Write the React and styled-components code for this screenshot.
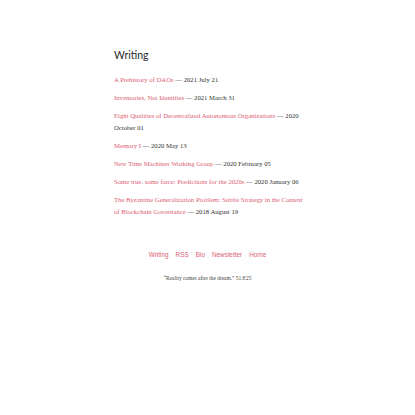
import React from 'react'
import styled, { createGlobalStyle } from 'styled-components'

const Global = createGlobalStyle`
  body { margin: 0; background: #fff; }
`

const posts = [
  { title: 'A Prehistory of DAOs', date: '2021 July 21' },
  { title: 'Inventories, Not Identities', date: '2021 March 31' },
  { title: 'Eight Qualities of Decentralized Autonomous Organizations', date: '2020 October 01' },
  { title: 'Memory I', date: '2020 May 13' },
  { title: 'New Time Machines Working Group', date: '2020 February 05' },
  { title: 'Some true, some farce: Predictions for the 2020s', date: '2020 January 06' },
  { title: 'The Byzantine Generalization Problem: Subtle Strategy in the Context of Blockchain Governance', date: '2018 August 19' },
]

const Page = styled.div`
  width: 415px;
  height: 415px;
  padding-top: 48px;
  box-sizing: border-box;
`

const Main = styled.main`
  width: 190px;
  margin-left: 114px;
`

const Title = styled.h1`
  font-family: Lato, 'Liberation Sans', sans-serif;
  font-weight: 400;
  font-size: 10.5px;
  line-height: 14px;
  color: #2a2a2a;
  margin: 0 0 12px;
`

const List = styled.ul`
  list-style: none;
  margin: 0;
  padding: 0;
`

const Item = styled.li`
  font-family: 'Liberation Serif', 'Times New Roman', serif;
  font-size: 6.7px;
  line-height: 12px;
  color: #333;
  margin-bottom: 6px;
`

const Link = styled.a`
  color: #dc6172;
  text-decoration: none;
`

const Footer = styled.footer`
  margin-top: 32px;
  text-align: center;
`

const Nav = styled.nav`
  display: flex;
  justify-content: center;
  gap: 7px;
  font-family: 'Liberation Sans', Arial, sans-serif;
  font-size: 6.4px;
  line-height: 10px;
`

const Quote = styled.p`
  font-family: 'Liberation Serif', 'Times New Roman', serif;
  font-size: 5.4px;
  line-height: 8px;
  color: #444;
  margin: 14px 0 0;
`

export default function App() {
  return (
    <Page>
      <Global />
      <Main>
        <Title>Writing</Title>
        <List>
          {posts.map(p => (
            <Item key={p.title}>
              <Link href="#">{p.title}</Link> — {p.date}
            </Item>
          ))}
        </List>
      </Main>
      <Footer>
        <Nav>
          {['Writing', 'RSS', 'Bio', 'Newsletter', 'Home'].map(n => (
            <Link key={n} href="#">{n}</Link>
          ))}
        </Nav>
        <Quote>“Reality comes after the dream.” 51:E25</Quote>
      </Footer>
    </Page>
  )
}
